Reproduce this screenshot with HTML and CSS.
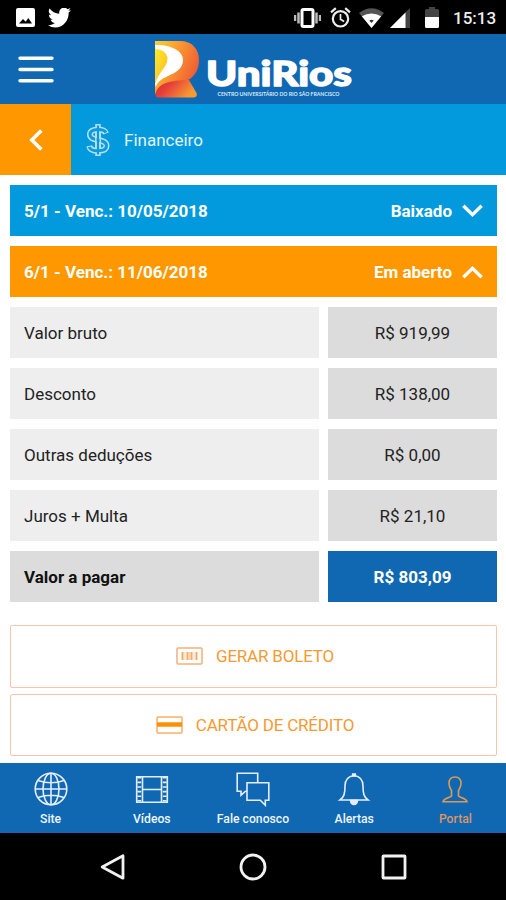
FILE: index.html
```html
<!DOCTYPE html>
<html lang="pt-BR">
<head>
<meta charset="utf-8">
<title>UniRios - Financeiro</title>
<link rel="stylesheet" href="styles.css">
</head>
<body>
<div class="status">
  <svg class="s-img" width="19" height="19" viewBox="0 0 19 19"><path fill="#fff" fill-rule="evenodd" d="M2 0h15a2 2 0 0 1 2 2v15a2 2 0 0 1-2 2H2a2 2 0 0 1-2-2V2a2 2 0 0 1 2-2zM3 15.500h13L12.300 10l-2.600 3.800L7 11z"/></svg>
  <svg class="s-tw" width="23" height="20" viewBox="0 2.7 24 19.6" preserveAspectRatio="none"><path fill="#fff" d="M23.95 4.57a10 10 0 0 1-2.82.77 4.96 4.96 0 0 0 2.16-2.72c-.95.56-2 .96-3.13 1.19a4.92 4.92 0 0 0-8.38 4.48C7.69 8.1 4.07 6.13 1.64 3.16a4.92 4.92 0 0 0 1.52 6.57 4.9 4.9 0 0 1-2.23-.61v.06a4.92 4.92 0 0 0 3.95 4.83 5 5 0 0 1-2.21.08 4.94 4.94 0 0 0 4.6 3.42A9.87 9.87 0 0 1 0 19.54a14 14 0 0 0 7.55 2.21c9.05 0 14-7.5 14-13.98l-.02-.63a9.94 9.94 0 0 0 2.42-2.57z"/></svg>
  <svg class="s-vib" width="27" height="20" viewBox="0 0 27 20"><path d="M1 7v6M4.500 4.500v11M22.500 4.500v11M26 7v6" stroke="#bbb" stroke-width="2.500"/><rect x="8" y="1.500" width="11" height="17" rx="1.500" fill="none" stroke="#fff" stroke-width="3"/></svg>
  <svg class="s-alarm" width="21" height="21" viewBox="0 0 21 21" fill="none" stroke="#eee"><circle cx="10.500" cy="11.800" r="7.700" stroke-width="2.200"/><path d="M1 5.300 5.800 1.200M20 5.300l-4.800-4.100" stroke-width="2.200"/><path d="M10.500 7v5.300l3.600 2.200" stroke-width="1.700"/></svg>
  <svg class="s-wifi" width="25" height="20" viewBox="0 0 25 20"><path fill="#555" d="M0 5Q12.500-4.500 25 5L12.500 20z"/><path fill="#fff" d="M2.800 8.300Q12.500 2.500 22.200 8.300L12.500 20z"/><path fill="#333" d="M10.300 12.500q2.200-1.300 4.400 0l-2.200 2.500z"/></svg>
  <svg class="s-sig" width="20" height="20" viewBox="0 0 20 20"><path fill="#444" d="M20 0v20H0z"/><path fill="#fff" d="M15.500 4.500V20H0z"/></svg>
  <svg class="s-bat" width="14" height="21" viewBox="0 0 14 21"><path fill="#444" d="M4 0h6v2h2.500A1.500 1.500 0 0 1 14 3.500V10H0V3.500A1.500 1.500 0 0 1 1.500 2H4z"/><path fill="#fff" d="M0 10h14v9.500a1.500 1.500 0 0 1-1.500 1.500h-11A1.500 1.500 0 0 1 0 19.500z"/></svg>
  <span class="clock">15:13</span>
</div>

<header class="header">
  <svg class="burger" width="36" height="28" viewBox="0 0 36 28" stroke="#fff" stroke-width="3.400" stroke-linecap="round"><path d="M2 2.300h32M2 13.500h32M2 24.800h32"/></svg>
  <svg class="logo" width="202" height="62" viewBox="0 0 202 62">
    <defs>
      <linearGradient id="r" x1="0" y1="0" x2="1" y2="0.500"><stop offset="0" stop-color="#ffd42a"/><stop offset=".5" stop-color="#fb9630"/><stop offset="1" stop-color="#ee5b35"/></linearGradient>
      <linearGradient id="l" x1="0" y1="0" x2="1" y2=".4"><stop offset="0" stop-color="#d92c35"/><stop offset=".4" stop-color="#e6403a"/><stop offset="1" stop-color="#f79a32"/></linearGradient>
      <linearGradient id="y" x1="0" y1="0" x2="1" y2="1"><stop offset="0" stop-color="#ffec24"/><stop offset="1" stop-color="#f9b52c"/></linearGradient>
    </defs>
    <path fill="url(#r)" d="M0 2H25C37 2 44 10 44 21 44 31 39 38 33 41L12 50 0 55z"/>
    <path fill="#fff" d="M0 6C12 5 28 10 28 21 28 30 20 34 13 37 6 40 3 43 0.500 48L0 44 3 31z"/>
    <path fill="url(#y)" d="M0 10C7 10 12.500 14 12.500 20 12.500 27 4 33 0.500 44H0z"/>
    <path fill="url(#l)" d="M0.500 54C4 44 14 41.500 34 41L41.500 54C42.500 57 41 58.500 38 58.500H4C1.500 58.500 0 57 0.500 54z"/>
    <text class="brand" x="51" y="47.300" textLength="146" lengthAdjust="spacingAndGlyphs">UniRios</text>
    <text class="tagline" x="62.500" y="57" textLength="122" lengthAdjust="spacingAndGlyphs">CENTRO UNIVERSITÁRIO DO RIO SÃO FRANCISCO</text>
  </svg>
</header>

<div class="titlebar">
  <div class="back"><svg width="14" height="22" viewBox="0 0 14 22" fill="none" stroke="#fff" stroke-width="3.600"><path d="M12.300 1.500 2.800 11l9.500 9.500"/></svg></div>
  <svg class="dollar" width="24" height="32" viewBox="0 0 24 32" fill="none"><g stroke="#b5e1f6" stroke-width="6"><path d="M20 9.500C19 6.500 16 5.500 12 5.500 7.500 5.500 4 7 4 10.500 4 14.500 8 15 12 16c5 1 8.500 2 8.500 5.800 0 3.500-3.500 5-8.500 5-4.500 0-8-1.200-8.800-5"/><path d="M12 0v32" stroke-width="5.500"/></g><g stroke="#0c9bdd" stroke-width="3"><path d="M20 8.500C19 6.500 16 5.500 12 5.500 7.500 5.500 4 7 4 10.500 4 14.500 8 15 12 16c5 1 8.500 2 8.500 5.800 0 3.500-3.500 5-8.500 5-4.500 0-8-1.200-8.800-4"/><path d="M12 1.500v29" stroke-width="2.200"/></g><path d="M9.800 8v16M14.300 8v16" stroke="#b5e1f6" stroke-width="1.500"/></svg>
  <span class="page-title">Financeiro</span>
</div>

<main class="content">
  <div class="bill closed"><span class="due">5/1 - Venc.: 10/05/2018</span><span class="state">Baixado</span><svg width="21" height="14" viewBox="0 0 20 13"><path d="M1.300 1.500 10 10l8.700-8.500"/></svg></div>
  <div class="bill open"><span class="due">6/1 - Venc.: 11/06/2018</span><span class="state">Em aberto</span><svg width="21" height="14" viewBox="0 0 20 13"><path d="M1.300 11.500 10 3l8.700 8.500"/></svg></div>
  <div class="row"><div class="label">Valor bruto</div><div class="value">R$ 919,99</div></div>
  <div class="row"><div class="label">Desconto</div><div class="value">R$ 138,00</div></div>
  <div class="row"><div class="label">Outras deduções</div><div class="value">R$ 0,00</div></div>
  <div class="row"><div class="label">Juros + Multa</div><div class="value">R$ 21,10</div></div>
  <div class="row total"><div class="label">Valor a pagar</div><div class="value">R$ 803,09</div></div>
  <div class="actions">
    <div class="btn"><svg width="27" height="18" viewBox="0 0 27 18" fill="none"><rect x="1" y="1" width="25" height="16" rx="1" stroke="#f9ae78" stroke-width="1.500"/><path d="M6.500 5v8M11.500 5v8M15.500 5v8M20.500 5v8" stroke="#f7a968" stroke-width="2"/><path d="M9 5v8M13.500 5v8M18 5v8" stroke="#fbd0ae"/></svg><span>GERAR BOLETO</span></div>
    <div class="btn"><svg width="27" height="18" viewBox="0 0 27 18" fill="none"><rect x="1" y="1" width="25" height="16" rx="1" stroke="#f9ae68" stroke-width="1.500"/><path d="M1 8.500h25" stroke="#ff8f0a" stroke-width="4.500"/></svg><span>CARTÃO DE CRÉDITO</span></div>
  </div>
</main>

<nav class="tabs">
  <div class="tab"><svg width="34" height="36" viewBox="0 0 34 36"><circle cx="17" cy="18" r="15.800"/><ellipse cx="17" cy="18" rx="8" ry="15.800"/><path d="M17 2v32M1 18h32M4 9.500Q17 14 30 9.500M4 26.500Q17 22 30 26.500"/></svg><span>Site</span></div>
  <div class="tab"><svg width="34" height="36" viewBox="0 0 34 36"><path d="M1.700 5.700h30.600v25.600H1.700zM7.500 5.700v25.600M26.500 5.700v25.600M7.500 18.500h19"/><path d="M4.300 6v25M29.700 6v25" stroke-width="3.800" stroke-dasharray="1.600 3"/></svg><span>Vídeos</span></div>
  <div class="tab"><svg width="34" height="36" viewBox="0 0 34 36"><path d="M11 20.200H9.500l-4.500 4v-4H1.200V2.200h20.500v9.600M11 11.800h21.800v17.400h-3.500v5l-5-5H11z"/></svg><span>Fale conosco</span></div>
  <div class="tab"><svg width="34" height="36" viewBox="0 0 34 36"><path d="M17 4.500C10 5.500 8 10 8 15c0 8-1 11-5 14h28c-4-3-5-6-5-14 0-5-2-9.500-9-10.500z"/><path d="M13.500 29.500h7q-.5 4-3.500 4t-3.500-4zM15.700 3h2.600v2h-2.600z" fill="#e5edff"/></svg><span>Alertas</span></div>
  <div class="tab active"><svg width="34" height="36" viewBox="0 0 34 36"><path d="M17 6c-4 0-6.200 2.500-6 6.500.1 3.500 1.300 4.800 2.500 7v5.500c-1 1.500-8 2-8.500 5.800h24c-.5-3.800-7.500-4.300-8.500-5.800v-5.500c1.200-2.200 2.400-3.500 2.500-7C23.200 8.500 21 6 17 6z"/></svg><span>Portal</span></div>
</nav>

<div class="system">
  <svg width="30" height="30" viewBox="0 0 30 30"><path d="M25 3.800v22.400L4.200 15z"/></svg>
  <svg width="30" height="30" viewBox="0 0 30 30"><circle cx="15" cy="15" r="12"/></svg>
  <svg width="30" height="30" viewBox="0 0 30 30"><rect x="4" y="4" width="22" height="22" rx=".5"/></svg>
</div>
</body>
</html>
```

FILE: styles.css
```css
* { box-sizing: border-box; }
body { margin: 0; width: 506px; height: 900px; overflow: hidden; background: #fff; font-family: Roboto, "Liberation Sans", sans-serif; font-size: 17px; color: #222; display: flex; flex-direction: column; }
svg { display: block; flex: none; }
span { white-space: nowrap; }

.status { height: 34px; flex: none; background: #000; display: flex; align-items: center; padding: 1px 11px 0 16px; }
.s-tw { margin-left: 13px; }
.s-vib { margin-left: auto; }
.s-alarm { margin-left: 9px; }
.s-wifi { margin-left: 8px; }
.s-sig { margin-left: 6px; }
.s-bat { margin-left: 15px; }
.clock { width: 42px; margin-left: 14px; color: #eee; font-weight: 500; font-size: 17px; line-height: 34px; }

.header { height: 70px; flex: none; background: #1068b3; display: flex; align-items: flex-start; padding: 0 18px; }
.burger { margin-top: 22px; }
.logo { margin: 5px 0 0 101px; }
.brand { font-family: Lato, sans-serif; font-weight: 900; font-size: 35px; fill: #fff; stroke: #fff; stroke-width: 1.4px; stroke-linejoin: round; }
.tagline { font-family: Lato, sans-serif; font-weight: 700; font-size: 5px; fill: #d9e9f8; }

.titlebar { height: 71px; flex: none; background: #0399dd; display: flex; align-items: center; color: #e3f5fd; }
.back { width: 71px; height: 71px; background: #ff9800; display: flex; align-items: center; justify-content: center; }
.dollar { margin-left: 15px; }
.page-title { margin-left: 14px; }

.content { flex: none; height: 588px; padding: 10px 9px 0 10px; }
.bill { height: 51px; margin-bottom: 10px; padding: 0 14px; display: flex; align-items: center; color: #fff; font-weight: 700; }
.closed { background: #0399dd; }
.open { background: #ff9800; }
.bill svg { fill: none; stroke: #fff; stroke-width: 3.2px; margin-left: 10px; }
.due { margin-right: auto; }
.row { display: grid; grid-template-columns: 309px 169px; gap: 9px; height: 51px; margin-bottom: 10px; }
.label, .value { display: flex; align-items: center; }
.label { background: #eee; padding-left: 14px; }
.value { background: #dcdcdc; justify-content: center; }
.total { font-weight: 700; color: #111; }
.total .label { background: #dcdcdc; }
.total .value { background: #1068b3; color: #fff; }
.actions { margin-top: 23px; display: grid; gap: 6px; }
.btn { height: 62.5px; border: 1.5px solid #fbc4ad; border-radius: 2px; display: flex; align-items: center; justify-content: center; gap: 13px; color: #f59a32; letter-spacing: -.2px; padding-left: 3px; }

.tabs { height: 70px; flex: none; background: #1068b3; display: grid; grid-template-columns: repeat(5, 1fr); }
.tab { display: flex; flex-direction: column; align-items: center; padding-top: 8px; color: #eef5ff; font-size: 12.2px; font-weight: 500; }
.tab svg { fill: none; stroke: #e5edff; stroke-width: 1.6px; }
.tab span { line-height: 16px; margin-top: 4px; }
.tab.active { color: #dd9565; }
.tab.active svg { stroke: #dd9a55; }

.system { height: 67px; flex: none; background: #000; display: grid; grid-template-columns: repeat(3, 140.5px); justify-content: center; align-items: center; justify-items: center; }
.system svg { fill: none; stroke: #f2f2f2; stroke-width: 2.8px; stroke-linejoin: round; }
```
